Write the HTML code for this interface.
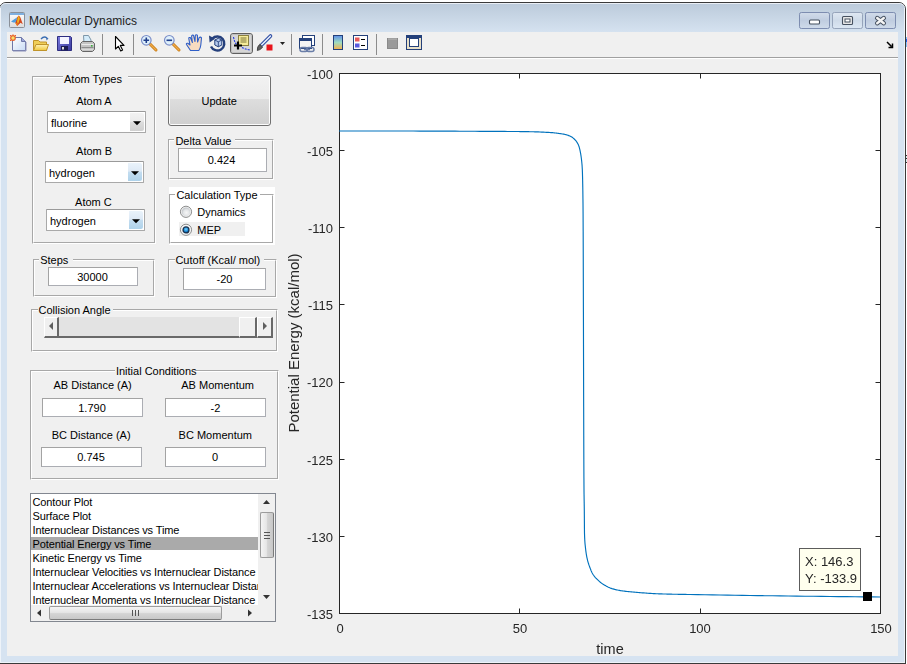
<!DOCTYPE html>
<html><head><meta charset="utf-8">
<style>
*{margin:0;padding:0;box-sizing:border-box}
html,body{width:907px;height:664px;overflow:hidden;background:#fff;font-family:"Liberation Sans",sans-serif;}
.a{position:absolute}
.t{position:absolute;white-space:nowrap;font-family:"Liberation Sans",sans-serif}
.g{will-change:transform}
</style></head><body>
<div class="a" style="left:-1px;top:2px;width:907px;height:662px;border:1px solid #3a3a3a;border-radius:7px 7px 0 0;background:#d6e3f1;overflow:hidden"></div>
<div class="a" style="left:0px;top:3px;width:905px;height:29px;border-top:1px solid #e9eef5;background:linear-gradient(#bccbdb,#d5e2f0);border-radius:6px 6px 0 0"></div>
<div class="a" style="left:0px;top:8px;width:1px;height:654px;background:#eef3f9"></div>
<div class="a" style="left:904px;top:8px;width:1px;height:654px;background:#eef3f9"></div>
<div class="a" style="left:0px;top:662px;width:905px;height:1px;background:#eef3f9"></div>
<div class="a" style="left:0px;top:663px;width:906px;height:1px;background:#3a3a3a"></div>
<div class="a" style="left:7px;top:32px;width:891px;height:624px;background:#f0f0f0;"></div>
<div class="a" style="left:7px;top:57px;width:891px;height:1px;background:#a0a0a0;"></div>
<div class="a" style="left:7px;top:58px;width:891px;height:1px;background:#fff;"></div>

<svg class="a" style="left:0;top:0" width="907" height="60">
<defs>
<linearGradient id="gPage" x1="0" y1="0" x2="1" y2="1"><stop offset="0" stop-color="#ffffff"/><stop offset="1" stop-color="#c9dcf5"/></linearGradient>
<linearGradient id="gFold" x1="0" y1="0" x2="0" y2="1"><stop offset="0" stop-color="#fff4b8"/><stop offset="1" stop-color="#f0c83c"/></linearGradient>
<linearGradient id="gFlop" x1="0" y1="0" x2="1" y2="1"><stop offset="0" stop-color="#7b7be0"/><stop offset="1" stop-color="#3a3a9c"/></linearGradient>
<linearGradient id="gCbar" x1="0" y1="0" x2="0" y2="1"><stop offset="0" stop-color="#5e8ee8"/><stop offset="0.5" stop-color="#9fdcc0"/><stop offset="1" stop-color="#f7b04a"/></linearGradient>
<linearGradient id="gWin" x1="0" y1="0" x2="0" y2="1"><stop offset="0" stop-color="#ffffff"/><stop offset="1" stop-color="#dcdcdc"/></linearGradient>
<linearGradient id="gBtn" x1="0" y1="0" x2="0" y2="1"><stop offset="0" stop-color="#e6e6e6"/><stop offset="1" stop-color="#cfcfcf"/></linearGradient>
<linearGradient id="gWB" x1="0" y1="0" x2="0" y2="1"><stop offset="0" stop-color="#dfe8f2"/><stop offset="0.5" stop-color="#cfdbe9"/><stop offset="1" stop-color="#dce7f3"/></linearGradient><linearGradient id="gWB2" x1="0" y1="0" x2="0" y2="1"><stop offset="0" stop-color="#d2dcea"/><stop offset="0.5" stop-color="#c0cde0"/><stop offset="1" stop-color="#cfdbea"/></linearGradient>
</defs>
<!-- title icon -->
<rect x="9.5" y="12.5" width="15" height="15" rx="1" fill="url(#gWin)" stroke="#8a9099"/>
<rect x="10" y="13" width="14" height="2" fill="#7fb0e0"/>
<path d="M17.2 17.2 L18.9 15.6 L20.4 17.6 L22.8 24.3 L20.6 22.7 L17.2 25.9 L15.2 22.8 Z" fill="#d2461e"/>
<path d="M11 21.6 L17.2 17.2 L15.6 22.6 L13.2 22.4 Z" fill="#4f9ddc"/>
<path d="M18.9 15.6 L19.8 18.8 L18.4 23.4 L17 22.2 L17.6 18 Z" fill="#f0b41c"/>
<path d="M15.2 22.8 L17.2 25.9 L18 23.6 Z" fill="#f08a1a"/>
<!-- window buttons -->
<rect x="799.5" y="12.5" width="30" height="16" rx="1.8" fill="url(#gWB2)" stroke="#7d8db0"/>
<rect x="832.5" y="12.5" width="30" height="16" rx="1.8" fill="url(#gWB)" stroke="#96a4ba"/>
<rect x="865.5" y="12.5" width="30" height="16" rx="1.8" fill="url(#gWB2)" stroke="#7d8db0"/>
<rect x="809.5" y="20" width="10" height="4" rx="1" fill="#fff" stroke="#45505f" stroke-width="1.1"/>
<rect x="842.5" y="16.5" width="10" height="8" rx="1" fill="#e8e8e8" stroke="#45505f" stroke-width="1.1"/>
<rect x="845" y="19" width="5" height="3" fill="#fff" stroke="#45505f" stroke-width="1"/>
<path d="M877.2 18 L883.8 23.2 M883.8 18 L877.2 23.2" stroke="#45505f" stroke-width="4.4" stroke-linecap="round"/>
<path d="M877.2 18 L883.8 23.2 M883.8 18 L877.2 23.2" stroke="#f4f4f4" stroke-width="2.4" stroke-linecap="round"/>
<!-- new -->
<path d="M12.5 37.5 H21.5 L25.5 41.5 V50.5 H12.5 Z" fill="url(#gPage)" stroke="#6f78a8"/>
<path d="M21.5 37.5 V41.5 H25.5" fill="#9ea8d8" stroke="#6f78a8"/>
<path d="M13 51 H26 V42" stroke="#8a8fb8" fill="none"/>
<circle cx="13" cy="38" r="2.3" fill="#f6e06a" stroke="#e8622c" stroke-width="1.2"/>
<path d="M10 35 l1.2 1.2 M16 35 l-1.2 1.2 M10 41 l1.2 -1.2 M13 34.3 v0.9" stroke="#e8622c" stroke-width="1"/>
<!-- open -->
<path d="M33.5 40.5 H38.5 L40 42 H46.5 V50.5 H33.5 Z" fill="#f0cf58" stroke="#c0942a"/>
<path d="M33.5 50.5 L36 44.5 H48.5 L46.5 50.5 Z" fill="url(#gFold)" stroke="#c0942a"/>
<path d="M41 39 Q44 35.5 47 38" stroke="#3d6fb3" stroke-width="1.3" fill="none"/>
<path d="M46 37 L48.5 38.5 L46.5 40.5 Z" fill="#3d6fb3"/>
<!-- save -->
<path d="M57.5 36.5 H70.5 L71.5 37.5 V50.5 H57.5 Z" fill="url(#gFlop)" stroke="#2d2d80"/>
<rect x="60" y="37" width="9" height="7" fill="#f4f4ff"/>
<rect x="61" y="46" width="7" height="4.5" fill="#1c1c50"/>
<rect x="62" y="47" width="2" height="2.5" fill="#ddd"/>
<!-- print -->
<path d="M83.5 35.5 H88.5 L91 40 V43 H84 Z" fill="#d4ecfa" stroke="#7d96a8"/>
<path d="M80.5 43.5 L82.5 41.5 H92.5 L94.5 43.5 V49.5 L92.5 51.5 H82.5 L80.5 49.5 Z" fill="#c4c4c4" stroke="#666"/>
<path d="M81.5 44.5 H93.5" stroke="#eaeaea"/>
<path d="M81.5 47.5 H93.5" stroke="#8c8c8c"/>
<path d="M82 49.5 H93" stroke="#dadada"/>
<rect x="91" y="45" width="1.6" height="1.6" fill="#3cae3c"/>
<!-- separators -->
<path d="M102.5 34 V55 M133.5 34 V55 M291.5 34 V55 M322.5 34 V55 M376.5 34 V55" stroke="#8c8c8c"/>
<!-- arrow cursor -->
<path d="M115.5 36.5 V49 L118.3 46.3 L120.7 51 L122.6 50 L120.3 45.4 H124 Z" fill="#fff" stroke="#000" stroke-width="1.1" stroke-linejoin="round"/>
<!-- zoom in -->
<path d="M150 44 L156 50" stroke="#c77a14" stroke-width="3" stroke-linecap="round"/>
<path d="M150 44 L156 50" stroke="#f0ab48" stroke-width="1.4" stroke-linecap="round"/>
<circle cx="146.3" cy="40.3" r="4.8" fill="#dff0fb" stroke="#7a8dc8" stroke-width="1.2"/>
<path d="M143.5 40.3 h5.6 M146.3 37.5 v5.6" stroke="#1f3d8a" stroke-width="1.6"/>
<!-- zoom out -->
<path d="M173 44 L179 50" stroke="#c77a14" stroke-width="3" stroke-linecap="round"/>
<path d="M173 44 L179 50" stroke="#f0ab48" stroke-width="1.4" stroke-linecap="round"/>
<circle cx="169.3" cy="40.3" r="4.8" fill="#dff0fb" stroke="#7a8dc8" stroke-width="1.2"/>
<path d="M166.5 40.3 h5.6" stroke="#1f3d8a" stroke-width="1.6"/>
<!-- hand -->
<path d="M190.5 50.5 L186.5 44.5 Q186 42.8 187.8 43.3 L190 45 L188.8 38.6 Q188.8 37 190.4 37.6 L192.4 42.5 L191.6 36.2 Q191.8 34.6 193.5 35.3 L195 41.5 L195.3 35.6 Q196 34.2 197.4 35.3 L197.6 42 L199.2 37.4 Q200.6 36.6 201.5 37.8 L200.8 45 Q200.4 48.5 198.8 50.5 Z" fill="#f8dcc0" stroke="#2f5fc8" stroke-width="1.1" stroke-linejoin="round"/>
<!-- rotate -->
<path d="M212.3 38.6 A7 7 0 1 1 211 46.5" stroke="#26407c" stroke-width="2.4" fill="none"/>
<path d="M209 35.5 L215 38.8 L209.6 42.6 Z" fill="#26407c"/>
<path d="M214.8 40 L218.3 38.3 L221.8 40 V45 L218.3 46.8 L214.8 45 Z" fill="#b8ccee" stroke="#26407c" stroke-width="1"/>
<path d="M214.8 40 L218.3 41.8 L221.8 40 M218.3 41.8 V46.8" stroke="#26407c" stroke-width="0.9" fill="none"/>
<!-- datacursor (pressed) -->
<rect x="230.5" y="33.5" width="22" height="20" rx="2.5" fill="#d6d6d6" stroke="#5e5e5e"/>
<rect x="231.5" y="34.5" width="20" height="18" rx="1.5" fill="none" stroke="#c0c0c0"/>
<rect x="238.5" y="35.5" width="10" height="10" fill="#f6ec9a" stroke="#8a8040"/>
<path d="M240.5 38 h6 M240.5 40 h6 M240.5 42 h6" stroke="#6e6630" stroke-width="0.9"/>
<path d="M233.5 37 Q234.5 43 237.5 45.5 M242 47.5 Q246 49.5 250.5 50" stroke="#2038e0" stroke-width="1.1" stroke-dasharray="2 1" fill="none"/>
<path d="M234 45.5 h8 M238 41.5 v8" stroke="#000" stroke-width="2.2"/>
<!-- brush -->
<path d="M261.5 45 L270.5 36" stroke="#2a48a0" stroke-width="3.6" stroke-linecap="round"/>
<path d="M261.5 45 L270.5 36" stroke="#e6eefc" stroke-width="1.6" stroke-linecap="round"/>
<path d="M257.3 50.5 Q257 46.5 259.8 44.3 L262.6 47 Q260.8 50.2 257.3 50.5 Z" fill="#606060" stroke="#303030" stroke-width="0.8"/>
<rect x="266.5" y="44.5" width="6" height="6" fill="#e8141b"/>
<path d="M280 42 h5 l-2.5 3 z" fill="#222"/>
<!-- linked plot -->
<rect x="302.5" y="35.5" width="12" height="10" fill="#fff" stroke="#24407a"/>
<rect x="299.5" y="38.5" width="12" height="10" fill="#f4f4f4" stroke="#24407a"/>
<rect x="300" y="39" width="11" height="2" fill="#24407a"/>
<path d="M302 47.5 h3.5 a2 2 0 0 1 0 4 h-3.5 a2 2 0 0 1 0 -4 Z M308.5 47.5 h3.5 a2 2 0 0 1 0 4 h-3.5 a2 2 0 0 1 0 -4 Z" fill="none" stroke="#6a7ea8" stroke-width="1.5"/>
<path d="M304 49.5 h6" stroke="#6a7ea8" stroke-width="1.5"/>
<!-- colorbar -->
<rect x="333.5" y="35.5" width="9" height="14" fill="url(#gCbar)" stroke="#24407a"/>
<!-- legend -->
<rect x="353.5" y="35.5" width="14" height="14" fill="#fff" stroke="#24407a"/>
<rect x="355" y="37.5" width="4.5" height="4" fill="#e85a5a"/>
<rect x="355" y="43.5" width="4.5" height="4" fill="#5a5ae0"/>
<path d="M361 39.5 h4 M361 45.5 h4" stroke="#000" stroke-width="1.2"/>
<!-- hide plot tools -->
<rect x="387.5" y="38.5" width="10" height="10" fill="#9a9a9a" stroke="#8a8a8a"/>
<path d="M388 39 h9" stroke="#b8b8b8"/>
<!-- show plot tools -->
<rect x="406.5" y="35.5" width="15" height="14" fill="#e8e0c8" stroke="#24407a"/>
<rect x="407" y="36" width="14" height="2" fill="#24407a"/>
<rect x="409.5" y="38.5" width="9" height="8" fill="#fff" stroke="#24407a"/>
<!-- toolbar right -->
<path d="M887 42 L891.5 46.5 M892.5 43.5 V47.5 H888.5" stroke="#000" stroke-width="1.5" fill="none"/>
</svg>
<div class="a" style="left:906px;top:37px;width:1px;height:10px;background:#86c4fa"></div><div class="a" style="left:906px;top:39px;width:1px;height:3px;background:#2060f0"></div>
<div class="a" style="left:906px;top:155px;width:1px;height:1px;background:#3a3030"></div><div class="a" style="left:906px;top:156px;width:1px;height:2px;background:#d8f0f0"></div><div class="a" style="left:906px;top:158px;width:1px;height:1px;background:#3a3030"></div><div class="a" style="left:906px;top:159px;width:1px;height:3px;background:#d8f0f0"></div><div class="a" style="left:906px;top:162px;width:1px;height:1px;background:#3a3030"></div>
<div class="t" style="left:29px;top:13.64px;font-size:12px;line-height:14px;color:#1e1e1e;">Molecular Dynamics</div>
<div class="a" style="left:32px;top:76px;width:124px;height:168px;border-top:1px solid #a8a8a8;border-left:1px solid #a8a8a8;border-right:1px solid #fff;border-bottom:1px solid #fff;"></div>
<div class="a" style="left:33px;top:77px;width:122px;height:166px;border-top:1px solid #fff;border-left:1px solid #fff;border-right:1px solid #a8a8a8;border-bottom:1px solid #a8a8a8;"></div>
<div class="a" style="left:63px;top:70px;width:65px;height:13px;background:#f0f0f0"></div>
<div class="t" style="left:64px;top:72.89px;font-size:11px;line-height:13px;color:#000;">Atom Types</div>
<div class="t" style="left:-106.15px;width:400px;text-align:center;top:94.99px;font-size:11px;line-height:13px;color:#000;">Atom A</div>
<div class="t" style="left:-105.85px;width:400px;text-align:center;top:145.19px;font-size:11px;line-height:13px;color:#000;">Atom B</div>
<div class="t" style="left:-106.6px;width:400px;text-align:center;top:195.89px;font-size:11px;line-height:13px;color:#000;">Atom C</div>
<div class="a" style="left:47px;top:111px;width:99px;height:22px;background:#fff;border:1px solid #a9a9a9;border-top-color:#9a9a9a;border-radius:1px"></div>
<div class="a" style="left:130px;top:113px;width:14px;height:18px;background:linear-gradient(#f2f2f2 0%,#ebebeb 46%,#dddddd 50%,#d0d0d0 100%);border-radius:0 2px 2px 0"></div>
<svg class="a" style="left:130px;top:113px" width="14" height="18"><path d="M3 8.2 h8 l-4 4 z" fill="#000"/></svg>
<div class="t" style="left:51px;top:116.89px;font-size:11px;line-height:13px;color:#000;">fluorine</div>
<div class="a" style="left:45px;top:161px;width:99px;height:22px;background:#fff;border:1px solid #a9a9a9;border-top-color:#9a9a9a;border-radius:1px"></div>
<div class="a" style="left:128px;top:163px;width:14px;height:18px;background:linear-gradient(#eaf3fb 0%,#dde9f5 46%,#c4ddf0 50%,#aed2ea 100%);border-radius:0 2px 2px 0"></div>
<svg class="a" style="left:128px;top:163px" width="14" height="18"><path d="M3 8.2 h8 l-4 4 z" fill="#000"/></svg>
<div class="t" style="left:49px;top:166.89px;font-size:11px;line-height:13px;color:#000;">hydrogen</div>
<div class="a" style="left:46px;top:209px;width:99px;height:22px;background:#fff;border:1px solid #a9a9a9;border-top-color:#9a9a9a;border-radius:1px"></div>
<div class="a" style="left:129px;top:211px;width:14px;height:18px;background:linear-gradient(#eaf3fb 0%,#dde9f5 46%,#c4ddf0 50%,#aed2ea 100%);border-radius:0 2px 2px 0"></div>
<svg class="a" style="left:129px;top:211px" width="14" height="18"><path d="M3 8.2 h8 l-4 4 z" fill="#000"/></svg>
<div class="t" style="left:50px;top:214.89px;font-size:11px;line-height:13px;color:#000;">hydrogen</div>
<div class="a" style="left:168px;top:75px;width:103px;height:51px;border:1px solid #707070;border-radius:3px;background:linear-gradient(#f2f2f2 0%,#ebebeb 47%,#dddddd 48%,#cfcfcf 100%);box-shadow:inset 0 0 0 1px #fcfcfc"></div>
<div class="t" style="left:19.19999999999999px;width:400px;text-align:center;top:94.99px;font-size:11px;line-height:13px;color:#000;">Update</div>
<div class="a" style="left:168px;top:139px;width:106px;height:41px;border-top:1px solid #a8a8a8;border-left:1px solid #a8a8a8;border-right:1px solid #fff;border-bottom:1px solid #fff;"></div>
<div class="a" style="left:169px;top:140px;width:104px;height:39px;border-top:1px solid #fff;border-left:1px solid #fff;border-right:1px solid #a8a8a8;border-bottom:1px solid #a8a8a8;"></div>
<div class="a" style="left:174px;top:133px;width:61px;height:13px;background:#f0f0f0"></div>
<div class="t" style="left:175.4px;top:135.29px;font-size:11px;line-height:13px;color:#000;">Delta Value</div>
<div class="a" style="left:178px;top:148px;width:89px;height:24px;background:#fff;border:1px solid #abadb3;border-top-color:#a3a3a3;border-left-color:#a3a3a3;"></div>
<div class="t" style="left:21.5px;width:400px;text-align:center;top:153.69px;font-size:11px;line-height:13px;color:#000;">0.424</div>
<div class="a" style="left:169px;top:187px;width:106px;height:58px;background:#fff"></div>
<div class="a" style="left:169px;top:194px;width:105px;height:50px;border-top:1px solid #a8a8a8;border-left:1px solid #a8a8a8;border-right:1px solid #fff;border-bottom:1px solid #fff;"></div>
<div class="a" style="left:170px;top:195px;width:103px;height:48px;border-top:1px solid #fff;border-left:1px solid #fff;border-right:1px solid #a8a8a8;border-bottom:1px solid #a8a8a8;"></div>
<div class="a" style="left:175px;top:187px;width:85px;height:13px;background:#fff"></div>
<div class="t" style="left:176.4px;top:189.19px;font-size:11px;line-height:13px;color:#000;">Calculation Type</div>
<svg class="a" style="left:179px;top:205px" width="14" height="14"><defs><radialGradient id="rg" cx="55%" cy="60%" r="55%"><stop offset="0" stop-color="#f6f6f6"/><stop offset="0.6" stop-color="#e4e6e8"/><stop offset="1" stop-color="#c4c8cc"/></radialGradient></defs><circle cx="7" cy="6.8" r="5.6" fill="#f0f0f0" stroke="#8e8f8f" stroke-width="1"/><circle cx="7" cy="6.8" r="4.3" fill="url(#rg)"/></svg>
<div class="t" style="left:197.3px;top:205.99px;font-size:11px;line-height:13px;color:#000;">Dynamics</div>
<div class="a" style="left:179px;top:222px;width:66px;height:14px;background:#f0f0f0"></div>
<svg class="a" style="left:179px;top:223px" width="14" height="14"><defs><radialGradient id="rg2" cx="50%" cy="40%" r="55%"><stop offset="0" stop-color="#7fd4ff"/><stop offset="0.6" stop-color="#1e8ed8"/><stop offset="1" stop-color="#0d5090"/></radialGradient></defs><circle cx="7" cy="6.8" r="5.6" fill="#f4f4f4" stroke="#8e8f8f" stroke-width="1"/><circle cx="7" cy="6.9" r="3.0" fill="url(#rg2)" stroke="#17304e" stroke-width="1.2"/></svg>
<div class="t" style="left:197.3px;top:223.99px;font-size:11px;line-height:13px;color:#000;">MEP</div>
<div class="a" style="left:33px;top:259px;width:122px;height:38px;border-top:1px solid #a8a8a8;border-left:1px solid #a8a8a8;border-right:1px solid #fff;border-bottom:1px solid #fff;"></div>
<div class="a" style="left:34px;top:260px;width:120px;height:36px;border-top:1px solid #fff;border-left:1px solid #fff;border-right:1px solid #a8a8a8;border-bottom:1px solid #a8a8a8;"></div>
<div class="a" style="left:39px;top:252px;width:34px;height:13px;background:#f0f0f0"></div>
<div class="t" style="left:40.2px;top:253.89px;font-size:11px;line-height:13px;color:#000;">Steps</div>
<div class="a" style="left:48px;top:267px;width:90px;height:19px;background:#fff;border:1px solid #abadb3;border-top-color:#a3a3a3;border-left-color:#a3a3a3;"></div>
<div class="t" style="left:-107.5px;width:400px;text-align:center;top:270.69px;font-size:11px;line-height:13px;color:#000;">30000</div>
<div class="a" style="left:168px;top:259px;width:109px;height:39px;border-top:1px solid #a8a8a8;border-left:1px solid #a8a8a8;border-right:1px solid #fff;border-bottom:1px solid #fff;"></div>
<div class="a" style="left:169px;top:260px;width:107px;height:37px;border-top:1px solid #fff;border-left:1px solid #fff;border-right:1px solid #a8a8a8;border-bottom:1px solid #a8a8a8;"></div>
<div class="a" style="left:175px;top:252px;width:89px;height:13px;background:#f0f0f0"></div>
<div class="t" style="left:175.4px;top:253.89px;font-size:11px;line-height:13px;color:#000;">Cutoff (Kcal/ mol)</div>
<div class="a" style="left:183px;top:268px;width:83px;height:22px;background:#fff;border:1px solid #abadb3;border-top-color:#a3a3a3;border-left-color:#a3a3a3;"></div>
<div class="t" style="left:24.5px;width:400px;text-align:center;top:272.69px;font-size:11px;line-height:13px;color:#000;">-20</div>
<div class="a" style="left:31px;top:309px;width:247px;height:43px;border-top:1px solid #a8a8a8;border-left:1px solid #a8a8a8;border-right:1px solid #fff;border-bottom:1px solid #fff;"></div>
<div class="a" style="left:32px;top:310px;width:245px;height:41px;border-top:1px solid #fff;border-left:1px solid #fff;border-right:1px solid #a8a8a8;border-bottom:1px solid #a8a8a8;"></div>
<div class="a" style="left:38px;top:302px;width:75px;height:13px;background:#f0f0f0"></div>
<div class="t" style="left:38.5px;top:303.89px;font-size:11px;line-height:13px;color:#000;">Collision Angle</div>
<div class="a" style="left:44px;top:317px;width:229px;height:21px;background:#e3e3e3;border-bottom:2px solid #696969"></div>
<div class="a" style="left:44px;top:317px;width:15px;height:21px;background:#f0f0f0;border-left:1px solid #fff;border-top:1px solid #fff;border-right:2px solid #696969;border-bottom:2px solid #696969"></div>
<div class="a" style="left:239px;top:317px;width:18px;height:21px;background:#f0f0f0;border-left:1px solid #fff;border-top:1px solid #fff;border-right:2px solid #696969;border-bottom:2px solid #696969"></div>
<div class="a" style="left:257px;top:317px;width:16px;height:21px;background:#f0f0f0;border-left:1px solid #fff;border-top:1px solid #fff;border-right:2px solid #696969;border-bottom:2px solid #696969"></div>
<svg class="a" style="left:44px;top:317px" width="14" height="21"><path d="M5 9 L9 5 V13 Z" fill="#5f5f5f"/></svg>
<svg class="a" style="left:257px;top:317px" width="16" height="21"><path d="M10 9 L6 5 V13 Z" fill="#5f5f5f"/></svg>
<div class="a" style="left:30px;top:370px;width:249px;height:110px;border-top:1px solid #a8a8a8;border-left:1px solid #a8a8a8;border-right:1px solid #fff;border-bottom:1px solid #fff;"></div>
<div class="a" style="left:31px;top:371px;width:247px;height:108px;border-top:1px solid #fff;border-left:1px solid #fff;border-right:1px solid #a8a8a8;border-bottom:1px solid #a8a8a8;"></div>
<div class="a" style="left:115px;top:362px;width:81px;height:13px;background:#f0f0f0"></div>
<div class="t" style="left:115.9px;top:364.79px;font-size:11px;line-height:13px;color:#000;">Initial Conditions</div>
<div class="t" style="left:-107.35px;width:400px;text-align:center;top:379.09px;font-size:11px;line-height:13px;color:#000;">AB Distance (A)</div>
<div class="t" style="left:17.650000000000006px;width:400px;text-align:center;top:379.09px;font-size:11px;line-height:13px;color:#000;">AB Momentum</div>
<div class="a" style="left:42px;top:398px;width:101px;height:19px;background:#fff;border:1px solid #abadb3;border-top-color:#a3a3a3;border-left-color:#a3a3a3;"></div>
<div class="t" style="left:-108px;width:400px;text-align:center;top:401.69px;font-size:11px;line-height:13px;color:#000;">1.790</div>
<div class="a" style="left:165px;top:398px;width:101px;height:19px;background:#fff;border:1px solid #abadb3;border-top-color:#a3a3a3;border-left-color:#a3a3a3;"></div>
<div class="t" style="left:15.5px;width:400px;text-align:center;top:401.69px;font-size:11px;line-height:13px;color:#000;">-2</div>
<div class="t" style="left:-108.8px;width:400px;text-align:center;top:428.89px;font-size:11px;line-height:13px;color:#000;">BC Distance (A)</div>
<div class="t" style="left:15.300000000000011px;width:400px;text-align:center;top:428.89px;font-size:11px;line-height:13px;color:#000;">BC Momentum</div>
<div class="a" style="left:41px;top:447px;width:101px;height:20px;background:#fff;border:1px solid #abadb3;border-top-color:#a3a3a3;border-left-color:#a3a3a3;"></div>
<div class="t" style="left:-109px;width:400px;text-align:center;top:451.19px;font-size:11px;line-height:13px;color:#000;">0.745</div>
<div class="a" style="left:165px;top:447px;width:101px;height:20px;background:#fff;border:1px solid #abadb3;border-top-color:#a3a3a3;border-left-color:#a3a3a3;"></div>
<div class="t" style="left:15px;width:400px;text-align:center;top:451.19px;font-size:11px;line-height:13px;color:#000;">0</div>
<div class="a" style="left:30px;top:493px;width:246px;height:129px;background:#fff;border:1px solid #828790"></div>
<div class="a" style="left:31px;top:537px;width:227px;height:13px;background:#aaaaaa"></div>
<div class="a" style="left:31px;top:494px;width:227px;height:111px;overflow:hidden">
<div class="t" style="left:1.5px;top:1.89px;font-size:11px;line-height:13px;color:#000;letter-spacing:-0.12px">Contour Plot</div>
<div class="t" style="left:1.5px;top:15.89px;font-size:11px;line-height:13px;color:#000;letter-spacing:-0.12px">Surface Plot</div>
<div class="t" style="left:1.5px;top:29.89px;font-size:11px;line-height:13px;color:#000;letter-spacing:-0.12px">Internuclear Distances vs Time</div>
<div class="t" style="left:1.5px;top:43.89px;font-size:11px;line-height:13px;color:#000;letter-spacing:-0.12px">Potential Energy vs Time</div>
<div class="t" style="left:1.5px;top:57.89px;font-size:11px;line-height:13px;color:#000;letter-spacing:-0.12px">Kinetic Energy vs Time</div>
<div class="t" style="left:1.5px;top:71.89px;font-size:11px;line-height:13px;color:#000;letter-spacing:-0.12px">Internuclear Velocities vs Internuclear Distance</div>
<div class="t" style="left:1.5px;top:85.89px;font-size:11px;line-height:13px;color:#000;letter-spacing:-0.12px">Internuclear Accelerations vs Internuclear Distance</div>
<div class="t" style="left:1.5px;top:99.89px;font-size:11px;line-height:13px;color:#000;letter-spacing:-0.12px">Internuclear Momenta vs Internuclear Distance</div>
</div>
<div class="a" style="left:258px;top:494px;width:17px;height:111px;background:#f0f0f0"></div>
<svg class="a" style="left:258px;top:494px" width="17" height="111"><path d="M5 10 h7 l-3.5 -4 z" fill="#333"/><path d="M5 101 h7 l-3.5 4 z" fill="#333"/></svg>
<div class="a" style="left:260px;top:512px;width:14px;height:46px;border:1px solid #9c9c9c;border-right-color:#7a7a7a;border-radius:2px;background:linear-gradient(90deg,#f4f4f4,#e6e6e6 45%,#d4d4d4 55%,#c8c8c8)"></div>
<svg class="a" style="left:260px;top:512px" width="14" height="46"><path d="M4 20.5 h6 M4 23.5 h6 M4 26.5 h6" stroke="#555" stroke-width="1"/></svg>
<div class="a" style="left:31px;top:605px;width:244px;height:16px;background:#f0f0f0"></div>
<svg class="a" style="left:31px;top:605px" width="244" height="16"><path d="M6 8 l4 -3.5 v7 z" fill="#333"/><path d="M221 8 l-4 -3.5 v7 z" fill="#333"/></svg>
<div class="a" style="left:49px;top:606px;width:173px;height:14px;border:1px solid #9c9c9c;border-bottom-color:#7a7a7a;border-radius:2px;background:linear-gradient(#f4f4f4,#e6e6e6 45%,#d4d4d4 55%,#c8c8c8)"></div>
<svg class="a" style="left:49px;top:606px" width="173" height="14"><path d="M83.5 4 v6 M86.5 4 v6 M89.5 4 v6" stroke="#555" stroke-width="1"/></svg>
<svg class="a" style="left:0;top:0" width="907" height="664">
<rect x="339.5" y="73.5" width="541" height="540" fill="#fff" stroke="#262626" stroke-width="1"/>
<path d="M339 73.5h5.5M881 73.5h-5.5M339 150.5h5.5M881 150.5h-5.5M339 227.5h5.5M881 227.5h-5.5M339 304.5h5.5M881 304.5h-5.5M339 382.5h5.5M881 382.5h-5.5M339 459.5h5.5M881 459.5h-5.5M339 536.5h5.5M881 536.5h-5.5M339 613.5h5.5M881 613.5h-5.5M339.5 614v-5.5M339.5 73v5.5M519.5 614v-5.5M519.5 73v5.5M700.5 614v-5.5M700.5 73v5.5M880.5 614v-5.5M880.5 73v5.5" stroke="#262626" stroke-width="1" fill="none"/>
<path d="M339.00 131.00 L345.75 131.00 L352.50 131.01 L359.25 131.01 L366.00 131.01 L372.75 131.02 L379.50 131.02 L386.25 131.02 L393.00 131.03 L399.75 131.03 L406.50 131.04 L413.25 131.04 L420.00 131.05 L425.00 131.06 L430.00 131.07 L435.00 131.08 L440.00 131.10 L445.00 131.12 L450.00 131.15 L455.00 131.17 L460.00 131.20 L465.00 131.22 L470.00 131.25 L475.00 131.27 L480.00 131.30 L482.75 131.31 L485.50 131.33 L488.25 131.34 L491.00 131.36 L493.75 131.37 L496.50 131.39 L499.25 131.40 L502.00 131.42 L504.75 131.44 L507.50 131.46 L510.25 131.48 L513.00 131.50 L514.42 131.51 L515.83 131.52 L517.25 131.54 L518.67 131.55 L520.08 131.56 L521.50 131.58 L522.92 131.60 L524.33 131.61 L525.75 131.63 L527.17 131.65 L528.58 131.68 L530.00 131.70 L531.67 131.73 L533.33 131.77 L535.00 131.82 L536.67 131.87 L538.33 131.93 L540.00 131.99 L541.67 132.06 L543.33 132.14 L545.00 132.22 L546.67 132.31 L548.33 132.40 L550.00 132.50 L550.83 132.56 L551.67 132.62 L552.50 132.69 L553.33 132.77 L554.17 132.86 L555.00 132.95 L555.83 133.05 L556.67 133.16 L557.50 133.26 L558.33 133.37 L559.17 133.49 L560.00 133.60 L560.48 133.67 L560.95 133.73 L561.42 133.80 L561.90 133.87 L562.38 133.95 L562.85 134.02 L563.33 134.11 L563.80 134.19 L564.28 134.28 L564.75 134.38 L565.23 134.49 L565.70 134.60 L566.21 134.73 L566.72 134.88 L567.23 135.03 L567.73 135.21 L568.24 135.39 L568.75 135.59 L569.26 135.81 L569.77 136.04 L570.27 136.28 L570.78 136.54 L571.29 136.81 L571.80 137.10 L572.17 137.32 L572.53 137.57 L572.90 137.84 L573.27 138.13 L573.63 138.44 L574.00 138.77 L574.37 139.12 L574.73 139.50 L575.10 139.89 L575.47 140.31 L575.83 140.74 L576.20 141.20 L576.43 141.49 L576.65 141.80 L576.88 142.13 L577.10 142.48 L577.33 142.85 L577.55 143.24 L577.77 143.66 L578.00 144.10 L578.23 144.58 L578.45 145.08 L578.67 145.62 L578.90 146.20 L579.02 146.55 L579.15 146.93 L579.27 147.35 L579.40 147.80 L579.52 148.27 L579.65 148.78 L579.77 149.31 L579.90 149.87 L580.02 150.45 L580.15 151.05 L580.27 151.66 L580.40 152.30 L580.50 152.82 L580.60 153.37 L580.70 153.94 L580.80 154.53 L580.90 155.16 L581.00 155.81 L581.10 156.49 L581.20 157.22 L581.30 157.97 L581.40 158.77 L581.50 159.61 L581.60 160.50 L581.66 161.03 L581.72 161.57 L581.77 162.12 L581.83 162.69 L581.89 163.30 L581.95 163.95 L582.01 164.66 L582.07 165.42 L582.12 166.26 L582.18 167.18 L582.24 168.19 L582.30 169.30 L582.36 170.59 L582.42 172.13 L582.47 173.93 L582.53 176.00 L582.59 178.35 L582.65 180.97 L582.71 183.88 L582.77 187.09 L582.83 190.60 L582.88 194.42 L582.94 198.55 L583.00 203.00 L583.08 213.57 L583.17 231.17 L583.25 254.41 L583.33 281.92 L583.42 312.32 L583.50 344.23 L583.58 376.26 L583.67 407.04 L583.75 435.18 L583.83 459.31 L583.92 478.04 L584.00 490.00 L584.02 492.27 L584.05 494.26 L584.08 496.01 L584.10 497.58 L584.12 499.03 L584.15 500.40 L584.17 501.75 L584.20 503.13 L584.22 504.59 L584.25 506.19 L584.27 507.97 L584.30 510.00 L584.32 511.64 L584.33 513.60 L584.35 515.81 L584.37 518.19 L584.38 520.65 L584.40 523.12 L584.42 525.51 L584.43 527.74 L584.45 529.74 L584.47 531.42 L584.48 532.70 L584.50 533.50 L584.58 535.73 L584.65 537.64 L584.73 539.27 L584.80 540.65 L584.88 541.82 L584.95 542.81 L585.02 543.67 L585.10 544.42 L585.17 545.10 L585.25 545.75 L585.32 546.41 L585.40 547.10 L585.53 548.35 L585.67 549.52 L585.80 550.62 L585.93 551.65 L586.07 552.61 L586.20 553.51 L586.33 554.36 L586.47 555.15 L586.60 555.90 L586.73 556.60 L586.87 557.27 L587.00 557.90 L587.23 558.91 L587.45 559.85 L587.67 560.74 L587.90 561.57 L588.12 562.35 L588.35 563.10 L588.58 563.80 L588.80 564.48 L589.03 565.13 L589.25 565.77 L589.48 566.39 L589.70 567.00 L589.97 567.72 L590.23 568.42 L590.50 569.11 L590.77 569.77 L591.03 570.42 L591.30 571.05 L591.57 571.64 L591.83 572.22 L592.10 572.76 L592.37 573.27 L592.63 573.75 L592.90 574.20 L593.24 574.73 L593.58 575.24 L593.92 575.71 L594.27 576.17 L594.61 576.60 L594.95 577.01 L595.29 577.41 L595.63 577.79 L595.98 578.15 L596.32 578.51 L596.66 578.86 L597.00 579.20 L597.52 579.71 L598.03 580.20 L598.55 580.68 L599.07 581.15 L599.58 581.60 L600.10 582.04 L600.62 582.46 L601.13 582.86 L601.65 583.25 L602.17 583.62 L602.68 583.97 L603.20 584.30 L603.93 584.75 L604.67 585.19 L605.40 585.62 L606.13 586.03 L606.87 586.42 L607.60 586.80 L608.33 587.16 L609.07 587.49 L609.80 587.81 L610.53 588.10 L611.27 588.36 L612.00 588.60 L612.92 588.87 L613.85 589.13 L614.77 589.38 L615.70 589.61 L616.62 589.83 L617.55 590.03 L618.48 590.22 L619.40 590.40 L620.33 590.57 L621.25 590.72 L622.18 590.87 L623.10 591.00 L624.48 591.18 L625.85 591.35 L627.23 591.51 L628.60 591.65 L629.98 591.79 L631.35 591.92 L632.73 592.04 L634.10 592.16 L635.48 592.27 L636.85 592.38 L638.23 592.49 L639.60 592.60 L640.98 592.71 L642.37 592.82 L643.75 592.92 L645.13 593.03 L646.52 593.13 L647.90 593.23 L649.28 593.32 L650.67 593.41 L652.05 593.49 L653.43 593.57 L654.82 593.64 L656.20 593.70 L657.58 593.76 L658.95 593.81 L660.33 593.86 L661.70 593.90 L663.08 593.95 L664.45 593.99 L665.83 594.03 L667.20 594.07 L668.58 594.10 L669.95 594.14 L671.33 594.17 L672.70 594.20 L674.14 594.23 L675.58 594.26 L677.03 594.29 L678.47 594.31 L679.91 594.34 L681.35 594.36 L682.79 594.39 L684.23 594.41 L685.67 594.43 L687.12 594.45 L688.56 594.48 L690.00 594.50 L697.50 594.62 L705.00 594.75 L712.50 594.87 L720.00 595.00 L727.50 595.12 L735.00 595.24 L742.50 595.36 L750.00 595.48 L757.50 595.59 L765.00 595.70 L772.50 595.80 L780.00 595.90 L788.33 596.01 L796.67 596.11 L805.00 596.20 L813.33 596.30 L821.67 596.39 L830.00 596.47 L838.33 596.56 L846.67 596.65 L855.00 596.73 L863.33 596.82 L871.67 596.91 L880.00 597.00" stroke="#0072bd" stroke-width="1.15" fill="none"/>
<rect x="799.5" y="548.5" width="61" height="42" fill="#ffffee" stroke="#5c5c5c" stroke-width="1"/>
<rect x="863" y="592" width="9" height="9" fill="#000"/>
</svg>
<div class="t g" style="left:804.5px;top:554.30px;font-size:13px;line-height:16px;color:#262626;">X: 146.3</div>
<div class="t g" style="left:804.5px;top:571.20px;font-size:13px;line-height:16px;color:#262626;">Y: -133.9</div>
<div class="t g" style="left:-66.69999999999999px;width:400px;text-align:right;top:66.80px;font-size:13px;line-height:16px;color:#262626;">-100</div>
<div class="t g" style="left:-66.69999999999999px;width:400px;text-align:right;top:143.94px;font-size:13px;line-height:16px;color:#262626;">-105</div>
<div class="t g" style="left:-66.69999999999999px;width:400px;text-align:right;top:221.08px;font-size:13px;line-height:16px;color:#262626;">-110</div>
<div class="t g" style="left:-66.69999999999999px;width:400px;text-align:right;top:298.22px;font-size:13px;line-height:16px;color:#262626;">-115</div>
<div class="t g" style="left:-66.69999999999999px;width:400px;text-align:right;top:375.37px;font-size:13px;line-height:16px;color:#262626;">-120</div>
<div class="t g" style="left:-66.69999999999999px;width:400px;text-align:right;top:452.51px;font-size:13px;line-height:16px;color:#262626;">-125</div>
<div class="t g" style="left:-66.69999999999999px;width:400px;text-align:right;top:529.65px;font-size:13px;line-height:16px;color:#262626;">-130</div>
<div class="t g" style="left:-66.69999999999999px;width:400px;text-align:right;top:606.80px;font-size:13px;line-height:16px;color:#262626;">-135</div>
<div class="t g" style="left:139.7px;width:400px;text-align:center;top:620.50px;font-size:13px;line-height:16px;color:#262626;">0</div>
<div class="t g" style="left:320.0333333333333px;width:400px;text-align:center;top:620.50px;font-size:13px;line-height:16px;color:#262626;">50</div>
<div class="t g" style="left:500.3666666666667px;width:400px;text-align:center;top:620.50px;font-size:13px;line-height:16px;color:#262626;">100</div>
<div class="t g" style="left:680.7px;width:400px;text-align:center;top:620.50px;font-size:13px;line-height:16px;color:#262626;">150</div>
<div class="t g" style="left:409.5px;width:400px;text-align:center;top:641.18px;font-size:14.5px;line-height:17px;color:#262626;">time</div>
<div class="t g" style="left:93.55000000000001px;top:334.3px;width:400px;height:18px;text-align:center;font-size:15px;line-height:18px;color:#262626;transform:rotate(-90deg);transform-origin:200px 9px">Potential Energy (kcal/mol)</div>
</body></html>
